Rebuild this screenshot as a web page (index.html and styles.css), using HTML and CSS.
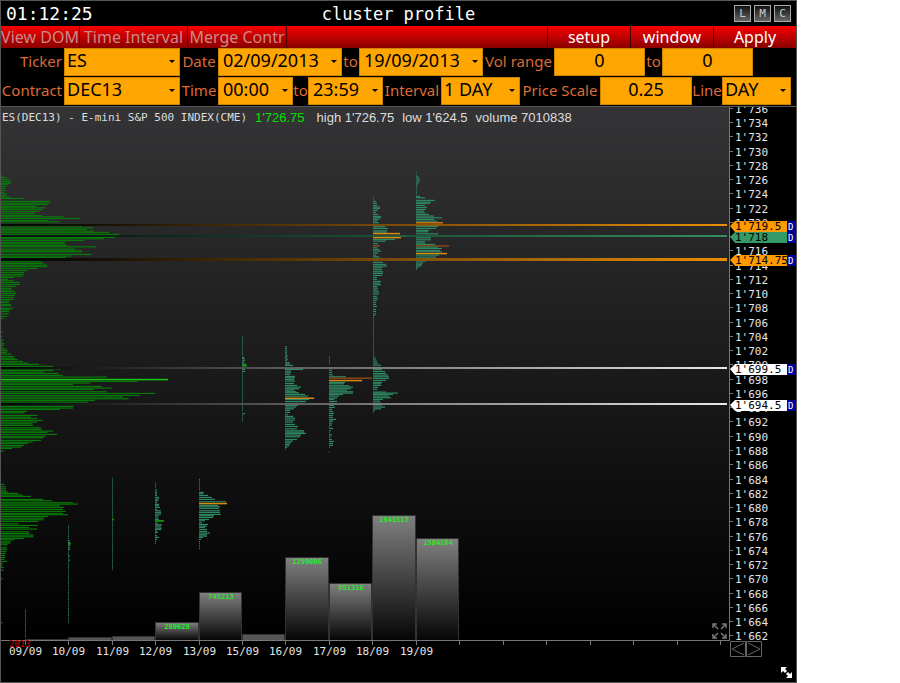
FILE: index.html
```html
<!DOCTYPE html>
<html lang="en">
<head>
<meta charset="utf-8">
<title>cluster profile</title>
<link rel="stylesheet" href="styles.css">
</head>
<body>
<main class="window">
  <header class="titlebar">
    <time class="clock">01:12:25</time>
    <h1 class="title">cluster profile</h1>
    <div class="window-buttons">
      <button type="button">L</button>
      <button type="button">M</button>
      <button type="button">C</button>
    </div>
  </header>

  <nav class="toolbar">
    <button type="button" class="tool tool-view">View DOM</button>
    <button type="button" class="tool tool-time">Time Interval</button>
    <button type="button" class="tool tool-merge">Merge Contr</button>
    <span class="spacer"></span>
    <button type="button" class="action">setup</button>
    <button type="button" class="action">window</button>
    <button type="button" class="action">Apply</button>
  </nav>

  <form class="filters">
    <div class="row row-top">
      <label class="end" for="ticker">Ticker</label>
      <div class="pick"><select id="ticker"><option>ES</option></select></div>
      <label for="from-date">Date</label>
      <div class="pick mid"><select id="from-date"><option>02/09/2013</option></select></div>
      <label for="to-date">to</label>
      <div class="pick mid"><select id="to-date"><option>19/09/2013</option></select></div>
      <label for="vol-min">Vol range</label>
      <input id="vol-min" type="text" value="0">
      <label for="vol-max">to</label>
      <input id="vol-max" type="text" value="0">
    </div>
    <div class="row row-bottom">
      <label class="end" for="contract">Contract</label>
      <div class="pick"><select id="contract"><option>DEC13</option></select></div>
      <label for="from-time">Time</label>
      <div class="pick mid"><select id="from-time"><option>00:00</option></select></div>
      <label for="to-time">to</label>
      <div class="pick mid"><select id="to-time"><option>23:59</option></select></div>
      <label for="interval">Interval</label>
      <div class="pick"><select id="interval"><option>1 DAY</option></select></div>
      <label for="scale">Price Scale</label>
      <input id="scale" type="text" value="0.25">
      <label for="line">Line</label>
      <div class="pick"><select id="line"><option>DAY</option></select></div>
    </div>
  </form>

  <section class="chart">
    <p class="info">
      <span class="instrument">ES(DEC13) - E-mini S&amp;P 500 INDEX(CME)</span>
      <span class="last">1'726.75</span>
      <span>high 1'726.75</span>
      <span>low 1'624.5</span>
      <span>volume 7010838</span>
    </p>
    <svg id="plot" viewBox="1 107 795 575">
      <defs>
        <linearGradient id="bg" x1="0" y1="0" x2="0" y2="1"><stop offset="0" stop-color="#343436"/><stop offset="1" stop-color="#000"/></linearGradient>
        <linearGradient id="bar" x1="0" y1="0" x2="0" y2="1"><stop offset="0" stop-color="#808080"/><stop offset="1" stop-color="#050505"/></linearGradient>
        <linearGradient id="fade-orange" gradientUnits="userSpaceOnUse" x1="40" y1="0" x2="727" y2="0"><stop offset="0" stop-color="#000"/><stop offset="1" stop-color="#ff9900"/></linearGradient>
        <linearGradient id="fade-teal" gradientUnits="userSpaceOnUse" x1="40" y1="0" x2="727" y2="0"><stop offset="0" stop-color="#001008"/><stop offset="1" stop-color="#339966"/></linearGradient>
        <linearGradient id="fade-white" gradientUnits="userSpaceOnUse" x1="10" y1="0" x2="727" y2="0"><stop offset="0" stop-color="#000"/><stop offset="1" stop-color="#fff"/></linearGradient>
      </defs>
      <rect x="1" y="107" width="728" height="533" fill="url(#bg)"/>
      <g id="profiles"></g>
      <g id="levels"></g>
      <g id="volumes"></g>
      <g id="axes"></g>
      <g id="tags"></g>
      <g class="expand-icon">
        <path d="M713 628v-4h4M713 624l5 5M722 624h4v4M726 624l-5 5M713 634v4h4M713 638l5-5M722 638h4v-4M726 638l-5-5"/>
      </g>
      <g class="step-icons">
        <path d="M730.5 641.5h15v15h-15zM746.5 641.5h15v15h-15zM744 643l-12 6 12 6M748 643l12 6-12 6"/>
      </g>
      <g class="resize-icon">
        <path d="M781 667h6l-2 2 2 2-2 2-2-2-2 2zM792 678h-6l2-2-2-2 2-2 2 2 2-2z"/>
      </g>
    </svg>
  </section>
</main>
<script src="chart.js"></script>
</body>
</html>
```
FILE: styles.css
```css
* { box-sizing: border-box; }

body {
  margin: 0;
  padding-right: 103px;
  background: #fff;
  font-family: "Noto Sans", sans-serif;
}

.window {
  border: 1px solid #555;
  background: #000;
}

.titlebar {
  display: grid;
  grid-template-columns: 1fr auto 1fr;
  align-items: center;
  height: 25px;
  padding: 0 5px;
  color: #fff;
  font-family: "DejaVu Sans Mono", monospace;
}

.clock { font-size: 18px; line-height: 22px; }

.title {
  margin: 0;
  font-size: 17px;
  font-weight: normal;
  line-height: 24px;
}

.window-buttons {
  display: flex;
  justify-content: flex-end;
  gap: 3px;
}

.window-buttons button {
  width: 17px;
  height: 17px;
  padding: 0;
  border: 1px solid #aaa;
  background: linear-gradient(#111, #666);
  color: #ccc;
  font: 11px/14px "DejaVu Sans Mono", monospace;
}

.toolbar {
  display: flex;
  height: 22px;
  background: linear-gradient(#f80000, #880000);
}

.toolbar button {
  padding: 0;
  border: 0;
  background: none;
  font: 16px/20px "Noto Sans", sans-serif;
  white-space: nowrap;
}

.toolbar .tool {
  border-right: 1px solid #500;
  color: #c88a8a;
}

.tool-view { width: 79px; }
.tool-time { width: 108px; }
.tool-merge { width: 99px; }
.spacer { flex: 1; }

.toolbar .action {
  width: 83px;
  border-left: 1px solid #400;
  color: #fff;
}

.row {
  display: grid;
  align-items: start;
  height: 29px;
}

.row-top {
  grid-template-columns: 63px 116fr 38px 124fr 17px 124fr 71px 91fr 17px 91fr 43fr;
}

.row-bottom {
  grid-template-columns: 63px 116fr 38px 75fr 15px 75fr 58px 79fr 80px 92fr 30px 69fr 5fr;
}

.row label {
  color: #dc6b36;
  font-size: 15px;
  line-height: 26px;
  text-align: center;
  white-space: nowrap;
}

.row .end {
  padding-right: 2px;
  text-align: right;
}

.row input,
.row select {
  display: block;
  width: 100%;
  min-width: 0;
  height: 28px;
  margin: 0;
  padding: 0 0 4px;
  border: 1px solid #cc8400;
  border-radius: 0;
  background: #ffa500;
  color: #000;
  font: 18px/22px "Noto Sans", sans-serif;
  appearance: none;
}

.row input { text-align: center; }
.row select { padding-left: 2px; }
.row .mid select { padding-left: 4px; }

.pick { position: relative; }

.pick::after {
  content: "";
  position: absolute;
  right: 5px;
  top: 12px;
  border: 3px solid transparent;
  border-top-color: #000;
  border-bottom: 0;
  pointer-events: none;
}

.chart {
  position: relative;
  border-top: 1px solid #555;
}

.info {
  position: absolute;
  top: 3px;
  left: 1px;
  display: flex;
  gap: 8px;
  margin: 0;
  color: #ddd;
  font: 13px/16px "Liberation Sans", sans-serif;
  white-space: nowrap;
}

.info .instrument { font: 11px/16px "DejaVu Sans Mono", monospace; }
.info .last { margin-right: 4px; color: #00e000; }

#plot {
  display: block;
  width: 100%;
  font-family: "DejaVu Sans Mono", monospace;
}

.total { fill: #087808; }
.total-peak { fill: #14cc14; }
.session { fill: #2f8763; }
.hot { fill: #d98a10; }
.warm { fill: #8a4410; }
.poc { fill: #14a814; }

.axis { fill: none; stroke: #777; }
.price, .date { fill: #e4e4e4; font-size: 11px; }
.year { fill: #d00; font-size: 9px; }
.volume { fill: #28e828; font-size: 7px; font-weight: bold; text-anchor: middle; }
.volume-bar { stroke: #333; }
.tag-text { fill: #000; font-size: 11px; }
.day-box { fill: #00009c; }
.day-text { fill: #fff; font-size: 9px; }

.expand-icon path { fill: none; stroke: #777; stroke-width: 1.5; }
.step-icons path { fill: none; stroke: #666; }
.resize-icon path { fill: #fff; }
```
FILE: chart.js
```js
const NS = "http://www.w3.org/2000/svg";

function add(parent, tag, attrs, text) {
  const el = document.createElementNS(NS, tag);
  for (const key in attrs) el.setAttribute(key, attrs[key]);
  if (text !== undefined) el.textContent = text;
  document.getElementById(parent).appendChild(el);
}

const priceY = p => 122 + (1734 - p) * 7.13;

const marks = { o: "hot", d: "warm", g: "poc", p: "total-peak" };

// Rows are "offset:length" or "from-to:length"; offsets are thirds of a pixel
// below top, lengths are divided by unit. A trailing letter picks a colour.
function profile(x, top, unit, cls, rows) {
  for (const row of rows.trim().split(/\s+/)) {
    const [, from, to, len, mark] = row.match(/^(\d+)(?:-(\d+))?:(\d+)([a-z]?)$/);
    for (let v = +from; v <= +(to || from); v += 5.35) {
      add("profiles", "rect", {
        x, y: top + v / 3 - 0.5, width: len / unit, height: mark ? 1.5 : len < 2 ? 1 : 1.2,
        class: marks[mark] || cls
      });
    }
  }
}

profile(1, 160, 3, "total", `48:8 53:17 59:29 65:30 70:29 74:22 79:14 85:12 91:14 97:9 101:18 106:17 111:27 115:68
124:147 129:148 133:139 139:105 143:134 148:124 154:116 160:101 166:122 170:188 175:237 181:143 185:176 193:239
197:242 203:276 208:257 213:279 217:324 223:354 229:344 232:342 236:309 241:249 247:192 251:192 256:198 260:286
267:222 272:243 275:241 283:271 288:211 292:195 300:155 305:122 310:128 315:138 319:138 325:109 331:79 337:70
343:70 348:66 352:38 358:20 362:38 367:55 373:57 379:45 385:32 390:30 394:42 400:46 406:42 412:38 418:38 423:25
427:24 433:30 437:32 445:35 449:28 454:24 461:24 469:18 475:8`);
profile(1, 330, 3, "total", `5:5 20:4 30:8 36:5 41:12 46:8 52:6 57:17 62:20 67:17 72:30 79:38 84:41 88:50 94:65 99:82
103:114 109:157 116:180 121:156 126:128 130:173 136:185 141:318 148:501p 154:410 159:267 163:216 169:302 174:333
178:278 185:317 190:463 196:416 201:366 206:383 211:281 216:260 223:219 229:218 234:216 238:177 244:77 248:70
256:110 261:90 265:108 271:125 276:108 281:94 286:96 293:120 298:122 303:156 307:140 313:168 319:134 323:128
331:120 336:95 340:80 346:68 351:60 355:33 363:9`);
profile(1, 470, 3, "total", `43:10 50:15 56:15 62:15 66:20 70:52 75:65 79:90 88:127 92:152 98:216 102:231 107:177
112:188 118:186 124:194 130:186 134:201 139:142 144:130 149:127 154:112 161:52 166:110 172:84 177:108 185:84
190:84 195:98 200:97 205:68 209:40 215:30 219:28 224:20 233:18 238:18 244:16 250:14 256:12 262:12 268:10 274:18
280:6 286:4 292:8 300:8 326:5 458:5`);

profile(25, 610, 1, "session", "0-84:1");
profile(68, 470, 1, "session", "168-209:1 212:2 217:2 221:3g 227:2 233:2 238:2 243-254:1 258:2 264:1 270:2 276-460:1");
profile(112, 470, 1, "session", "25-143:1 148:2g 153-298:1");
profile(155, 470, 1, "session", `40-55:1 60:2 66:2 71:2 76:2 82:4 87:4 92:3 98:2 103:4 107:4 112:5 118:2 122:6 127:6
132:6 137:4 143:3 148:4 152:9g 159:3 164:7 168:6 174:7 178:6 183:2 187:3 192:1 197:2 202:4 208:2 214:1 220:1`);
profile(199, 470, 1, "session", `28-62:1 67:5 71:4 76:9 82:13 88:16 95:27 100:28o 106:19 110:21 115:20 122:21 127:21
133:22 137:15 142:14 148:10 152:6 158:3 163:9 168:8 172:6 178:8 184:8 189:11 194:8 198:8 202:4 208:2 215-240:1`);
profile(242, 330, 1, "session", "20-78:1 82:2 86:3 92:3 98:2 102:4 106:5g 112:3 118:3 124:3 130-246:1 251:3 257-275:1");
profile(285, 330, 1, "session", `50-75:2 77:3 82:2 87:3 92:2 98:5 102:5 106:8 114:19 118:18 123:6 128:6 133:5 139:10
143:10 148:9 153:10 160:9 166:12 171:16 176:14 180:9 185:11 188:14 193:20 198:23 204:29o 208:24 214:21 220:20
226:13 231:11 236:9 241:5 247:5 254:3 259:8 264:10 270:10 276:8 283:10 289:13 296:12 302:19 306:19 310:21 315:16
320:15 328:12 333:8 338:6 343:5 348:4 352:2 357:1`);
profile(329, 330, 1, "session", `80-105:1 113:2 120:3 127:3 134:4 140:17 144:43d 151:33o 157:16 161:15 167:20 171:24
176:22 180:18 185:24 189:24 193:14 198:10 204:8 208:5 214:8 220:6 226:5 232:6 238:3 244:4 250:5 256:4 262:4 268:7
273:4 279:3 285:3 290:1 295:4 302:2 308:1 314:3 320:2 328:3 334:5 340:4 346:4 352:1 366:1`);
profile(373, 165, 1, "session", `97:1 103:1 109:3 115:4 121:4 126:7 130:7 136:5 142:3 148:5 154:8 158:8 163:6 168:4
173:6 181:10 185:12 190:15 197:14 201:14 205:27o 213:33o 217:28o 223:22 228:13 236:5 242:7d 248:4 253:6 258:8
264:5 270:3 275:6 280:8 286:5 292:10 298:13 303:14 308:9 314:9 320:10 325:10 331:9 337:4 343:4 349:8 354:7 359:8
364:4 369:5 375:5 381:6 387:6 394:4 400:5 406:4 412:3 418:3 424:4 433:3 439:3 446:3 451:2 457-570:1 576:2 582:3
588:4 594:5 600:8 607:8 613:9 619:12 625:13 630:15 635:16 640:16 646:13 652:9 656:8 661:8 667:5 673:4 681:13
684:25 688:20 693:16 698:18 703:10 708:7 714:8 720:9 726:12 731:8 736:2 742:1`);
profile(416, 165, 1, "session", `22:1 30:1 36:3 42:4 48:4 54:3 60:2 66-88:1 94:4 98:9 106:19 111:15 115:14 121:9
127:11 133:10 138:8 143:9 148:13 153:18 158:26 163:18 168:21 173:27o 176:27d 181:25 184:22 190:20 196:13 200:12
206:22 212:15 218:15 224:15 230:9 234:9 238:19 242:33d 246:22 250:26 256:24 260:26 265:31o 270:23 276:20 282:18
288:10 294:7 299:6 303:5 308:2 313:1`);

const levels = [
  { price: 1719.5, label: "1'719.5", paint: "orange", fill: "#ff9900", size: 2 },
  { price: 1718, label: "1'718", paint: "teal", fill: "#339966", size: 2 },
  { price: 1714.75, label: "1'714.75", paint: "orange", fill: "#ff9900", size: 3 },
  { price: 1699.5, label: "1'699.5", paint: "white", fill: "#fff", size: 2 },
  { price: 1694.5, label: "1'694.5", paint: "white", fill: "#fff", size: 2 }
];

for (const l of levels) {
  const y = Math.round(priceY(l.price));
  add("levels", "rect", { x: 1, y: y - 1, width: 726, height: l.size, fill: `url(#fade-${l.paint})`, opacity: 0.9 });
  add("tags", "path", { d: `M730 ${y + 1}l5-5h52v11h-52z`, fill: l.fill });
  add("tags", "text", { x: 735, y: y + 5, class: "tag-text" }, l.label);
  add("tags", "rect", { x: 787, y: y - 4, width: 9, height: 11, rx: 1, class: "day-box" });
  add("tags", "text", { x: 788, y: y + 5, class: "day-text" }, "D");
}

const slots = [25, 68, 112, 155, 199, 242, 285, 329, 372, 416, 459, 503, 546, 590, 633, 677, 720];
const days = ["09/09", "10/09", "11/09", "12/09", "13/09", "15/09", "16/09", "17/09", "18/09", "19/09"];
const tops = [639, 637, 636, 622, 592, 634, 557, 583, 515, 538];
const sums = ["", "", "", "280628", "745213", "", "1299606", "891316", "1941517", "1584164"];

days.forEach((day, i) => {
  const width = slots[i + 1] - slots[i] - 1;
  add("volumes", "rect", { x: slots[i] + 0.5, y: tops[i] + 0.5, width, height: 640 - tops[i], fill: tops[i] > 630 ? "#555" : "url(#bar)", class: "volume-bar" });
  if (sums[i]) add("volumes", "text", { x: slots[i] + 22, y: tops[i] + 7, class: "volume" }, sums[i]);
  add("axes", "text", { x: slots[i] - 16, y: 655, class: "date" }, day);
});

add("axes", "path", { d: "M1 640.5H729M729.5 107V641", class: "axis" });
for (const x of slots) add("axes", "path", { d: `M${x + 0.5} 641v4`, class: "axis" });
add("axes", "text", { x: 9, y: 647, class: "year" }, "2013");

for (let p = 1736; p >= 1662; p -= 2) {
  const y = Math.round(priceY(p));
  add("axes", "path", { d: `M730 ${y + 0.5}h3`, class: "axis" });
  add("axes", "text", { x: 735, y: y + 5, class: "price" }, "1'" + (p - 1000));
}
```
